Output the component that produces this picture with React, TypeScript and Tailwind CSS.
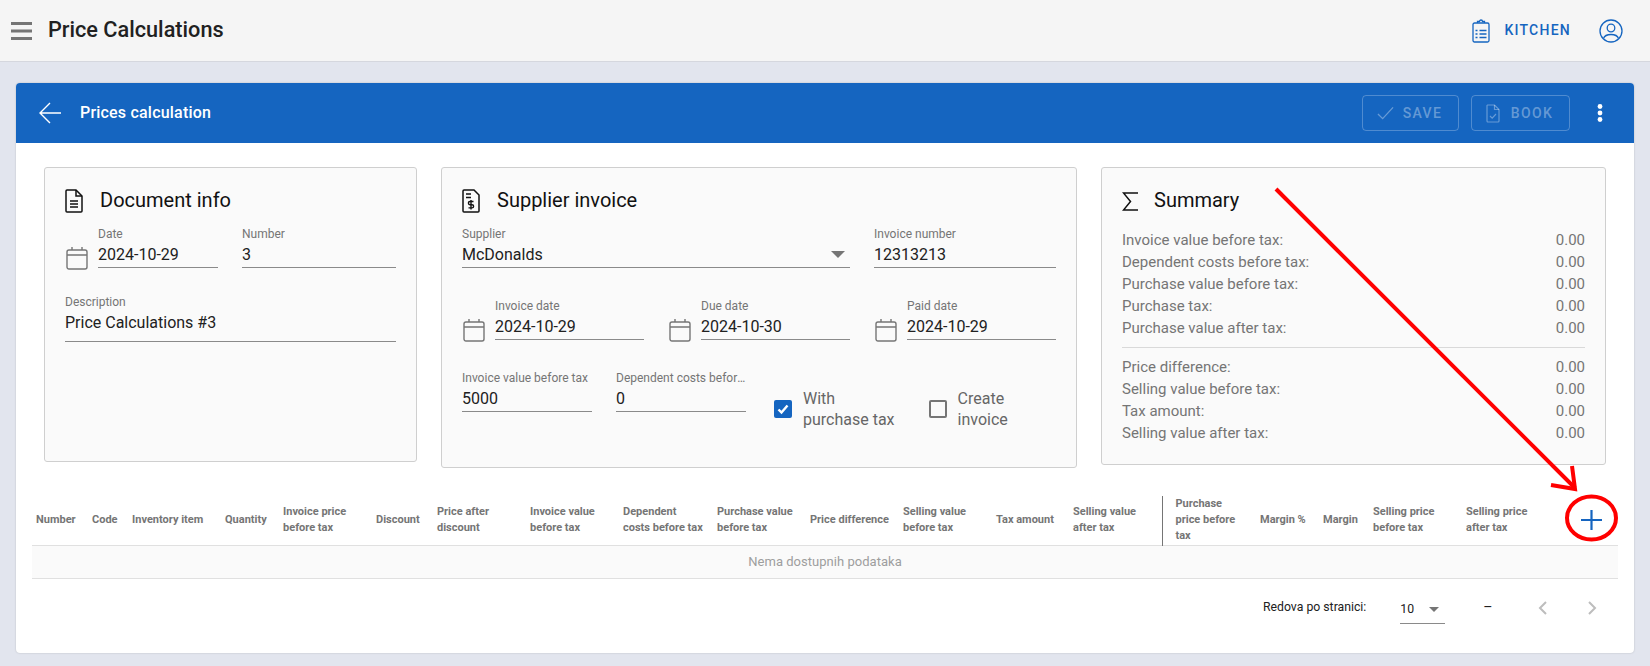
import React from "react";

const blue = "#1565c0";

function Calendar() {
  return (
    <svg viewBox="0 0 22 24" className="h-[24px] w-[22px] shrink-0 text-[#757575]" fill="none" stroke="currentColor" strokeWidth="1.4">
      <rect x="1" y="4" width="20" height="19" rx="2" />
      <path d="M1 9h20M6 1v3M16 1v3" />
    </svg>
  );
}

function Field({ label, value, className = "" }: { label: string; value: string; className?: string }) {
  return (
    <div className={"min-w-0 border-b border-[#8a8a8a] " + className}>
      <div className="truncate text-[12px] leading-[18px] text-[#757575]">{label}</div>
      <div className="truncate pb-[1px] pt-[1px] text-[16px] leading-[22px] text-[#212121]">{value}</div>
    </div>
  );
}

function DateField({ label, value, className = "" }: { label: string; value: string; className?: string }) {
  return (
    <div className={"flex items-end gap-[10px] " + className}>
      <div className="-mb-[2px] ml-[1px]"><Calendar /></div>
      <Field label={label} value={value} className="flex-1" />
    </div>
  );
}

function CardTitle({ icon, title }: { icon: React.ReactNode; title: string }) {
  return (
    <div className="flex h-[24px] items-center gap-[17px] text-[20px] text-[#111]">
      {icon}
      <span className="mb-[3px]">{title}</span>
    </div>
  );
}

function Check({ checked, label }: { checked?: boolean; label: React.ReactNode }) {
  return (
    <div className="flex items-center gap-[11px] text-[16px] leading-[21px] text-[#666]">
      {checked ? (
        <div className="grid h-[18px] w-[18px] place-items-center rounded-[2px] bg-[#1565c0]">
          <svg viewBox="0 0 14 14" className="h-[14px] w-[14px]" fill="none" stroke="white" strokeWidth="2.4">
            <path d="M2.5 7.5l3 3 6-7" />
          </svg>
        </div>
      ) : (
        <div className="h-[18px] w-[18px] rounded-[2px] border-2 border-[#757575]" />
      )}
      <div>{label}</div>
    </div>
  );
}

const sumTop = ["Invoice value before tax:", "Dependent costs before tax:", "Purchase value before tax:", "Purchase tax:", "Purchase value after tax:"];
const sumBottom = ["Price difference:", "Selling value before tax:", "Tax amount:", "Selling value after tax:"];

function SumRow({ label }: { label: string }) {
  return (
    <div className="flex h-[22px] items-center justify-between text-[15px] text-[#757575]">
      <span>{label}</span>
      <span>0.00</span>
    </div>
  );
}

const cols: { w: string; label: React.ReactNode; extra?: string }[] = [
  { w: "w-[56px]", label: "Number" },
  { w: "w-[40px]", label: "Code" },
  { w: "w-[93px]", label: "Inventory item" },
  { w: "w-[58px]", label: "Quantity" },
  { w: "w-[93px]", label: <>Invoice price<br />before tax</> },
  { w: "w-[61px]", label: "Discount" },
  { w: "w-[93px]", label: <>Price after<br />discount</> },
  { w: "w-[93px]", label: <>Invoice value<br />before tax</> },
  { w: "w-[94px]", label: <>Dependent<br />costs before tax</> },
  { w: "w-[93px]", label: <>Purchase value<br />before tax</> },
  { w: "w-[93px]", label: "Price difference" },
  { w: "w-[93px]", label: <>Selling value<br />before tax</> },
  { w: "w-[77px]", label: "Tax amount" },
  { w: "w-[93px]", label: <>Selling value<br />after tax</> },
  { w: "w-[94px]", label: <>Purchase<br />price before<br />tax</>, extra: "border-l border-[#757575] !pl-[13px]" },
  { w: "w-[63px]", label: "Margin %" },
  { w: "w-[50px]", label: "Margin" },
  { w: "w-[93px]", label: <>Selling price<br />before tax</> },
  { w: "w-[93px]", label: <>Selling price<br />after tax</> },
];

export default function App() {
  return (
    <div className="flex h-[666px] flex-col overflow-hidden bg-[#e2e5ee] text-[#212121] [font-family:Roboto,sans-serif]">
      <header className="flex h-[62px] shrink-0 items-center border-b border-[#d5d7de] bg-[#f5f5f5] pl-[11px] pr-[27px]">
        <svg viewBox="0 0 21 18" className="h-[18px] w-[21px]" fill="#757575">
          <rect width="21" height="3" />
          <rect y="7.5" width="21" height="3" />
          <rect y="15" width="21" height="3" />
        </svg>
        <h1 className="ml-[16px] text-[21.7px] font-medium text-[#212121]">Price Calculations</h1>
        <div className="ml-auto flex items-center" style={{ color: blue }}>
          <svg viewBox="0 0 18 24" className="h-[24px] w-[18px]" fill="none" stroke="currentColor" strokeWidth="1.3">
            <rect x="1" y="4" width="16" height="19" rx="1.5" />
            <path d="M5.5 4V2.5h2a1.5 1.5 0 0 1 3 0h2V4" />
            <path d="M7.5 11.5h7M7.5 15h7M7.5 18.5h7M3.5 11.5h2M3.5 15h2M3.5 18.5h2" strokeWidth="1.5" />
          </svg>
          <span className="ml-[14px] text-[14px] font-medium tracking-[1.25px]">KITCHEN</span>
          <svg viewBox="0 0 24 24" className="ml-[28px] h-[24px] w-[24px]" fill="none" stroke="currentColor" strokeWidth="1.3">
            <circle cx="12" cy="12" r="11" />
            <circle cx="12" cy="9" r="3.8" />
            <path d="M4.5 19.5c1-3 4-4 7.5-4s6.5 1 7.5 4" />
          </svg>
        </div>
      </header>

      <main className="flex-1 px-[16px] pt-[21px]">
        <div className="h-[570px] overflow-hidden rounded-[4px] bg-white shadow-[0_0_2px_rgba(0,0,0,0.2)]">
          <div className="flex h-[60px] items-center bg-[#1565c0] pl-[23px] pr-[31px] text-white">
            <svg viewBox="0 0 22 22" className="h-[22px] w-[22px]" fill="none" stroke="white" strokeWidth="1.4">
              <path d="M22 11H1M11 1L1 11l10 10" />
            </svg>
            <span className="ml-[19px] text-[16px] font-medium tracking-[0.2px]">Prices calculation</span>
            <button className="ml-auto flex h-[36px] w-[97px] items-center justify-center gap-[9px] rounded-[4px] border border-white/25 pr-[2px] text-[14px] font-medium tracking-[1.4px] text-white/35">
              <svg viewBox="0 0 18 14" className="h-[14px] w-[17px]" fill="none" stroke="currentColor" strokeWidth="1.4">
                <path d="M1 8l5 5L17 1" />
              </svg>
              SAVE
            </button>
            <button className="ml-[12px] flex h-[36px] w-[99px] items-center justify-center gap-[11px] rounded-[4px] border border-white/25 pr-[2px] text-[14px] font-medium tracking-[1.4px] text-white/35">
              <svg viewBox="0 0 14 19" className="h-[19px] w-[14px]" fill="none" stroke="currentColor" strokeWidth="1.2">
                <path d="M1.5 1h7L13 5.5V17a1 1 0 0 1-1 1H2a1 1 0 0 1-1-1V1.5z" />
                <path d="M8.5 1v4.5H13M4 12l2.2 2.2L10 10" />
              </svg>
              BOOK
            </button>
            <svg viewBox="0 0 6 18" className="ml-[27px] h-[18px] w-[6px]" fill="white">
              <circle cx="3" cy="2.5" r="2.4" />
              <circle cx="3" cy="9" r="2.4" />
              <circle cx="3" cy="15.5" r="2.4" />
            </svg>
          </div>

          <div className="px-[28px] pt-[24px]">
            <div className="grid h-[300px] grid-cols-[373px_636px_505px] items-start gap-[24px]">
              <section className="h-[295px] rounded-[3px] border border-[#cfcfcf] bg-[#fafafa] px-[20px] pt-[21px]">
                <CardTitle
                  title="Document info"
                  icon={
                    <svg viewBox="0 0 18 24" className="h-[24px] w-[18px]" fill="none" stroke="#111" strokeWidth="1.5">
                      <path d="M2 1h9l6 6v15a1 1 0 0 1-1 1H2a1 1 0 0 1-1-1V2a1 1 0 0 1 1-1z" />
                      <path d="M11 1v6h6M5 12h8M5 15h8M5 18h8" />
                    </svg>
                  }
                />
                <div className="mt-[12px] flex gap-[24px]">
                  <DateField label="Date" value="2024-10-29" className="w-[153px]" />
                  <Field label="Number" value="3" className="flex-1" />
                </div>
                <Field label="Description" value="Price Calculations #3" className="mt-[25px] [&>div:last-child]:pb-[7px]" />
              </section>

              <section className="h-[301px] rounded-[3px] border border-[#cfcfcf] bg-[#fafafa] px-[20px] pt-[21px]">
                <CardTitle
                  title="Supplier invoice"
                  icon={
                    <svg viewBox="0 0 18 24" className="h-[24px] w-[18px]" fill="none" stroke="#111" strokeWidth="1.5">
                      <path d="M2 1h10l5 5v16a1 1 0 0 1-1 1H2a1 1 0 0 1-1-1V2a1 1 0 0 1 1-1z" />
                      <path d="M4 5h5M4 8.5h5M11.5 12.5H8a1.3 1.3 0 0 0 0 3.2h2a1.3 1.3 0 0 1 0 3.2H6.5M9 11v9.5" strokeWidth="1.4" />
                    </svg>
                  }
                />
                <div className="mt-[12px] flex gap-[24px]">
                  <div className="relative w-[388px]">
                    <Field label="Supplier" value="McDonalds" />
                    <div className="absolute right-[5px] top-[26px] h-0 w-0 border-x-[7px] border-t-[7px] border-x-transparent border-t-[#757575]" />
                  </div>
                  <Field label="Invoice number" value="12313213" className="flex-1" />
                </div>
                <div className="mt-[29px] grid grid-cols-3 gap-[24px]">
                  <DateField label="Invoice date" value="2024-10-29" />
                  <DateField label="Due date" value="2024-10-30" />
                  <DateField label="Paid date" value="2024-10-29" />
                </div>
                <div className="mt-[29px] flex items-end">
                  <Field label="Invoice value before tax" value="5000" className="w-[130px]" />
                  <Field label="Dependent costs before tax" value="0" className="ml-[24px] w-[130px]" />
                  <div className="-mb-[18px] ml-[28px]">
                    <Check checked label={<>With<br />purchase tax</>} />
                  </div>
                  <div className="-mb-[18px] ml-[34px]">
                    <Check label={<>Create<br />invoice</>} />
                  </div>
                </div>
              </section>

              <section className="h-[298px] rounded-[3px] border border-[#cfcfcf] bg-[#fafafa] px-[20px] pt-[21px]">
                <CardTitle
                  title="Summary"
                  icon={
                    <svg viewBox="0 0 16 19" className="-mr-[1px] h-[19px] w-[16px]" fill="none" stroke="#111" strokeWidth="1.5">
                      <path d="M16 1H1.5L8.5 9.5 1.5 18H16" />
                    </svg>
                  }
                />
                <div className="mt-[16px]">
                  {sumTop.map((s) => <SumRow key={s} label={s} />)}
                </div>
                <div className="my-[8px] border-t border-[#d9d9d9]" />
                <div>
                  {sumBottom.map((s) => <SumRow key={s} label={s} />)}
                </div>
              </section>
            </div>

            <div className="-mx-[12px] mt-[29px]">
              <table className="w-[1586px] table-fixed border-collapse">
                <thead>
                  <tr className="h-[49px] border-b border-[#e0e0e0]">
                    {cols.map((c, i) => (
                      <th key={i} className={"px-[4px] text-left align-middle text-[11px] font-bold leading-[16px] text-[#757575] " + c.w + " " + (c.extra ?? "")}>
                        {c.label}
                      </th>
                    ))}
                    <th className="w-[63px] pr-[16px] align-middle text-[#1565c0]">
                      <svg viewBox="0 0 21 20" className="ml-auto h-[20px] w-[21px]" fill="none" stroke="currentColor" strokeWidth="2.2">
                        <path d="M0 10h21M10.5 0v20" />
                      </svg>
                    </th>
                  </tr>
                </thead>
                <tbody>
                  <tr className="h-[33px] border-b border-[#e0e0e0] bg-[#fafafa]">
                    <td colSpan={20} className="text-center text-[13px] tracking-[0.03px] text-[#9e9e9e]">Nema dostupnih podataka</td>
                  </tr>
                </tbody>
              </table>
              <div className="flex h-[58px] items-center text-[12.25px] text-[#212121]">
                <span className="ml-[1231px]">Redova po stranici:</span>
                <div className="relative ml-[34px] flex h-[32px] w-[45px] items-center border-b border-[#8a8a8a] pt-[4px]">
                  <span>10</span>
                  <div className="absolute right-[6px] top-[15px] h-0 w-0 border-x-[5px] border-t-[5px] border-x-transparent border-t-[#757575]" />
                </div>
                <span className="ml-[38px] text-[14px]">–</span>
                <svg viewBox="0 0 10 14" className="ml-[45px] h-[14px] w-[10px]" fill="none" stroke="#bdbdbd" strokeWidth="2"><path d="M8 1L2 7l6 6" /></svg>
                <svg viewBox="0 0 10 14" className="ml-[39px] h-[14px] w-[10px]" fill="none" stroke="#bdbdbd" strokeWidth="2"><path d="M2 1l6 6-6 6" /></svg>
              </div>
            </div>
          </div>
        </div>
      </main>

      {/* red annotation drawn on top of the screenshot */}
      <svg className="pointer-events-none absolute left-0 top-0 h-[666px] w-[1650px]" viewBox="0 0 1650 666" fill="none" stroke="#f00" strokeWidth="4">
        <path d="M1276 189L1575 488" />
        <path d="M1551 485L1575 489L1572 466" />
        <ellipse cx="1591.5" cy="518" rx="24.5" ry="21.5" />
      </svg>
    </div>
  );
}
